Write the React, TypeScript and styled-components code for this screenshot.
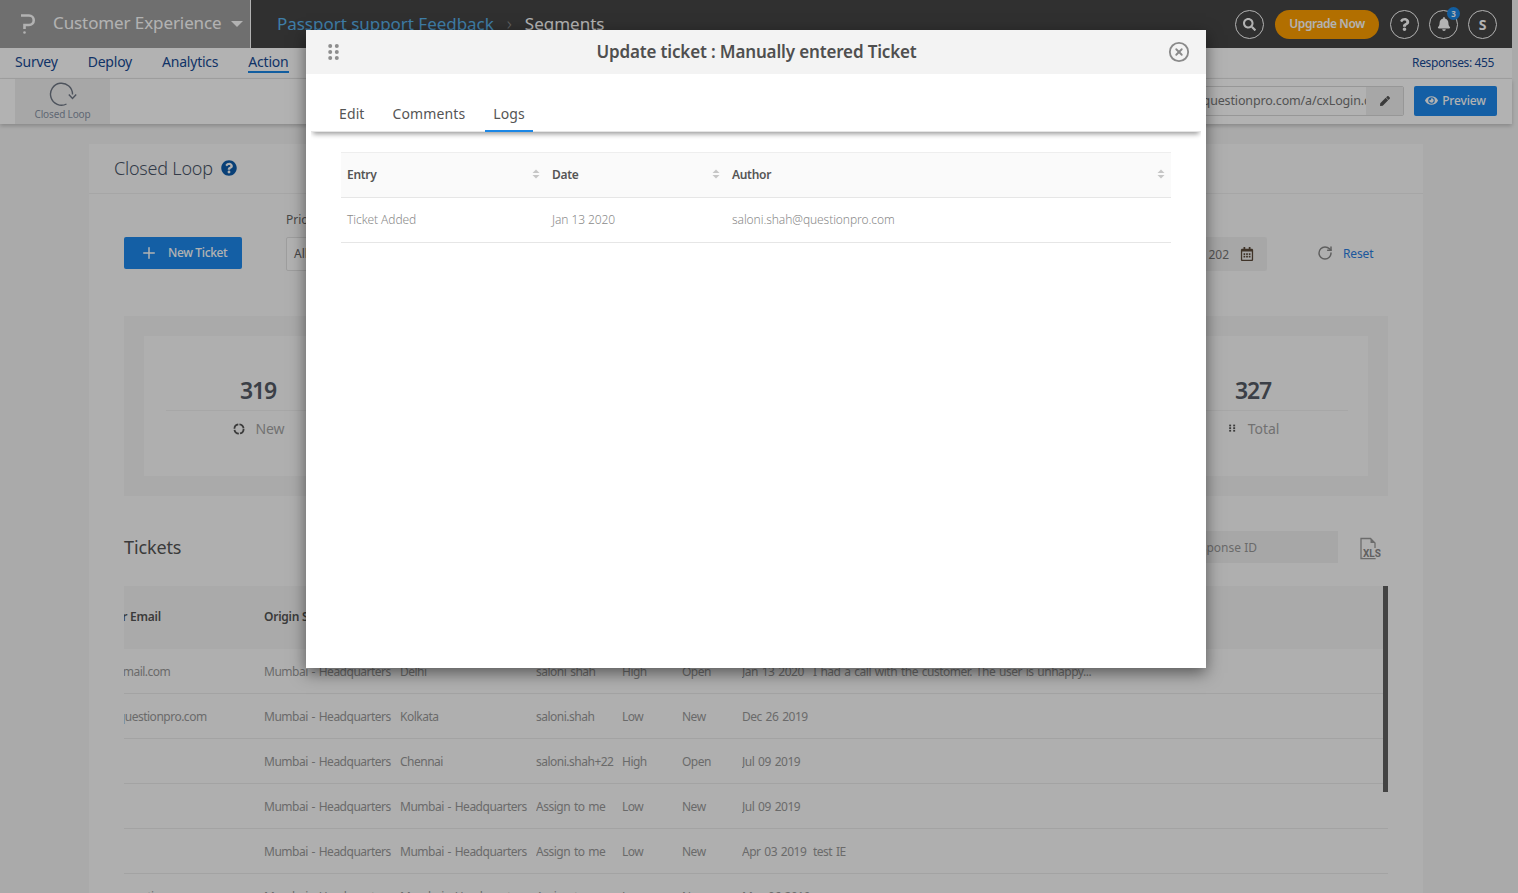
import React from "react";
import styled, { createGlobalStyle } from "styled-components";
import { RotateCw, Plus, CircleX } from "lucide-react";
import { FaSearch, FaQuestion, FaBell, FaPen, FaEye, FaRegCalendarAlt, FaQuestionCircle } from "react-icons/fa";

const Global = createGlobalStyle`
  html, body { margin: 0; padding: 0; height: 100%; overflow: hidden; background: #f4f4f4; }
  body { font-family: "Noto Sans", "Open Sans", sans-serif; }
  * { box-sizing: border-box; }
`;

const Page = styled.div`position: relative; width: 1518px; height: 893px; overflow: hidden; background: #f4f4f4;`;
const Main = styled.div`width: 1512px; height: 893px; display: flex; flex-direction: column;`;

const TopBar = styled.header`height: 48px; background: #454545; display: flex; align-items: center; flex: none;`;
const Product = styled.div`width: 251px; height: 48px; background: #9f9f9f; border-right: 1px solid #fff; display: flex; align-items: center; padding: 0 0 1px 20px; color: #fff; font-size: 17px; letter-spacing: -.1px;`;
const ProductName = styled.span`margin-left: 17px; padding-bottom: 2px;`;
const Caret = styled.span`margin-left: 9px; width: 0; height: 0; border-left: 6px solid transparent; border-right: 6px solid transparent; border-top: 6px solid #fff;`;
const Crumbs = styled.div`margin-left: 26px; padding-bottom: 2px; font-size: 17px; display: flex; align-items: center; white-space: nowrap;`;
const CrumbLink = styled.span`color: #5bb5f0; letter-spacing: -.03px;`;
const CrumbSep = styled.span`color: #8c8c8c; margin: 0 13px; font-size: 19px; font-weight: 300; line-height: 20px;`;
const CrumbNow = styled.span`color: #fff;`;
const TopActions = styled.div`margin-left: auto; display: flex; align-items: center; gap: 10px; padding-right: 15px;`;
const Round = styled.div`position: relative; width: 29px; height: 29px; border-radius: 50%; border: 1.5px solid #fff; display: flex; align-items: center; justify-content: center; color: #fff; font-size: 14px; font-weight: 700;`;
const Upgrade = styled.div`width: 104px; height: 29px; margin: 0 1px; border-radius: 15px; background: #ff9f00; color: #fff; font-size: 12px; font-weight: 600; display: flex; align-items: center; justify-content: center; letter-spacing: -.45px; padding-bottom: 1px;`;
const Badge = styled.span`position: absolute; top: -4px; right: -3px; width: 13px; height: 13px; border-radius: 50%; background: #1b87e6; font-size: 8px; font-weight: 700; display: flex; align-items: center; justify-content: center;`;

const NavBar = styled.nav`height: 31px; flex: none; background: #fff; border-bottom: 1px solid #e6e6e6; display: flex; align-items: center; padding: 0 18px 3px 15px; font-size: 14px; letter-spacing: -.22px; color: #174a94;`;
const NavItem = styled.span<{ $active?: boolean }>`margin-right: 30px; line-height: 18px; ${p => p.$active ? "border-bottom: 2px solid #1b87e6; margin-top: 2px;" : ""}`;
const Responses = styled.span`margin-left: auto; padding-top: 2px; font-size: 12px; letter-spacing: -.38px;`;

const SubBar = styled.div`height: 45px; flex: none; background: #fff; display: flex; align-items: center; padding: 0 15px 1px; box-shadow: 0 2px 4px rgba(0,0,0,.2); position: relative;`;
const Tile = styled.div`width: 95px; height: 45px; margin-bottom: -1px; background: #f0f0f0; display: flex; flex-direction: column; align-items: center; color: #8a94a6; font-size: 10px; letter-spacing: -.15px; padding-top: 1px; line-height: 14px;`;
const UrlBox = styled.div`margin-left: auto; width: 276px; height: 30px; border: 1px solid #d9d9d9; border-radius: 2px; display: flex; align-items: center; overflow: hidden; font-size: 12.5px; color: #777; background: #fff;`;
const UrlText = styled.span`flex: 1; white-space: nowrap; overflow: hidden; letter-spacing: -.15px; padding-bottom: 1px;`;
const UrlEdit = styled.span`width: 37px; height: 100%; background: #f0f0f0; display: flex; align-items: center; justify-content: center; color: #555; font-size: 10px;`;
const Preview = styled.div`margin-left: 10px; width: 83px; height: 30px; background: #1d89ec; color: #fff; border-radius: 2px; font-size: 12px; font-weight: 500; display: flex; align-items: center; justify-content: center; gap: 4px; letter-spacing: -.15px; padding-bottom: 1px;`;

const Card = styled.section`margin: 20px 0 0 89px; width: 1334px; background: #fbfbfb; flex: none;`;
const CardHead = styled.div`height: 50px; padding: 0 0 2px 25px; border-bottom: 1px solid #eee; display: flex; align-items: center; gap: 8px; font-size: 18px; font-weight: 300; color: #4a5568; letter-spacing: -.22px;`;
const CardBody = styled.div`padding: 19px 35px 0;`;
const Filters = styled.div`display: flex; align-items: flex-end;`;
const NewTicket = styled.div`width: 118px; height: 32px; margin-bottom: 2px; background: #1d89ec; color: #fff; border-radius: 2px; display: flex; align-items: center; padding: 0 0 1px 16px; gap: 10px; font-size: 12px; font-weight: 500; letter-spacing: -.35px;`;
const Field = styled.div`margin-left: 44px; display: flex; flex-direction: column; gap: 10px; font-size: 12px; line-height: 14px; color: #666;`;
const SelectBox = styled.div`width: 160px; height: 34px; border: 1px solid #e3e3e3; border-radius: 2px; background: #fff; padding-left: 7px; display: flex; align-items: center; color: #666;`;
const DateBox = styled.div`margin-left: auto; width: 180px; height: 34px; border-radius: 2px; background: #f0f0f0; font-size: 12px; color: #777; display: flex; align-items: center; justify-content: flex-end; gap: 11px; padding-right: 13px;`;
const Reset = styled.div`margin: 0 15px 0 50px; width: 56px; height: 34px; display: flex; align-items: center; gap: 10px; font-size: 12px; color: #2a7de0; letter-spacing: -.15px; padding-bottom: 2px;`;
const ResetIcon = styled.span`display: flex; color: #888;`;

const Stats = styled.div`margin-top: 45px; height: 180px; background: #f4f4f4; padding: 20px;`;
const StatsInner = styled.div`height: 140px; background: #fbfbfb; padding: 0 20px 0 22px; display: flex; justify-content: space-between;`;
const Stat = styled.div<{ $w: number }>`width: ${p => p.$w}px; display: flex; flex-direction: column; align-items: center;`;
const StatNum = styled.div`height: 75px; width: 100%; border-bottom: 1px solid #f0f0f0; font-size: 23px; font-weight: 600; color: #555b66; text-align: center; line-height: 30px; padding-top: 39px; letter-spacing: -1.2px;`;
const StatLabel = styled.div<{ $gap: number }>`margin: 9px 0 0 2px; font-size: 14px; color: #a3a3a3; display: flex; align-items: center; gap: ${p => p.$gap}px; line-height: 18px; letter-spacing: -.05px;`;
const StatIcon = styled.svg`color: #555; flex: none;`;

const TicketsBar = styled.div`margin-top: 35px; height: 32px; display: flex; align-items: center;`;
const TicketsTitle = styled.h2`margin: 0; font-size: 18px; font-weight: 400; color: #555; letter-spacing: -.12px;`;
const SearchBox = styled.div`margin-left: auto; width: 260px; height: 32px; background: #f0f0f0; display: flex; align-items: center; padding-left: 51px; font-size: 12px; color: #999; white-space: nowrap;`;
const XlsWrap = styled.div`margin: 3px 7px 0 21px; display: flex;`;

const TableWrap = styled.div`position: relative; margin-top: 23px; overflow: hidden; height: 330px;`;
const Thumb = styled.div`position: absolute; top: 0; right: 0; width: 5px; height: 206px; background: #606060;`;
const Grid = styled.div`margin-left: -52px; display: grid; grid-template-columns: 192px 136px 136px 86px 60px 60px 71px 1fr; font-size: 12px; color: #999; white-space: nowrap;`;
const Row = styled.div`display: contents;`;
const HeadCell = styled.div`height: 63px; background: #f4f4f4; font-weight: 600; color: #555; display: flex; align-items: center; letter-spacing: -.25px; padding-bottom: 3px;`;
const Cell = styled.div`height: 45px; border-bottom: 1px solid #eaeaea; display: flex; align-items: center; letter-spacing: -.5px; word-spacing: 1.2px; overflow: hidden;`;

const Overlay = styled.div`position: absolute; inset: 0; background: rgba(0,0,0,.3);`;
const Modal = styled.div`position: absolute; left: 306px; top: 30px; width: 900px; height: 638px; background: #fff; box-shadow: 0 5px 15px rgba(0,0,0,.5); display: flex; flex-direction: column;`;
const ModalHead = styled.div`height: 44px; flex: none; background: #f3f3f3; display: flex; align-items: center; justify-content: space-between; padding: 0 16px 0 22px;`;
const ModalTitle = styled.h1`margin: 0 0 0 5px; padding-bottom: 2px; font-size: 17px; font-weight: 600; color: #4f4f4f; letter-spacing: -.15px;`;
const CloseIcon = styled.span`display: flex; color: #8a8a8a;`;
const Tabs = styled.div`margin: 0 5px; height: 58px; flex: none; border-bottom: 1px solid #e5e5e5; box-shadow: 0 4px 5px -2px rgba(0,0,0,.4); display: flex; align-items: flex-end; padding-left: 20px; clip-path: inset(0 0 -12px 0);`;
const Tab = styled.div<{ $active?: boolean }>`height: 35px; padding: 0 8px; margin-right: 12px; font-size: 14px; color: #555; letter-spacing: .12px; display: flex; align-items: center; margin-bottom: -1px; border-bottom: 2px solid ${p => p.$active ? "#1b87e6" : "transparent"};`;
const LogTable = styled.div`margin: 20px 35px 0; display: grid; grid-template-columns: 205px 180px 1fr; font-size: 12px;`;
const LogHead = styled.div`height: 46px; background: #fafafa; border-top: 1px solid #eee; border-bottom: 1px solid #e6e6e6; display: flex; align-items: center; justify-content: space-between; padding: 0 6px 2px; font-weight: 600; color: #555; letter-spacing: -.3px;`;
const LogCell = styled.div`height: 45px; border-bottom: 1px solid #e6e6e6; display: flex; align-items: center; padding: 0 6px 2px; color: #8a8a8a; font-weight: 300; letter-spacing: -.08px;`;

const SortIcon = () => (
  <svg width="8" height="10" viewBox="0 0 8 10"><path d="M4 0.5 7.5 4H.5zM4 9.5 .5 6h7z" fill="#c6c6c6" /></svg>
);
const Grip = () => (
  <svg width="12" height="16" viewBox="0 0 12 16" fill="#8d8d8d">
    {[2, 8, 14].map(y => [2.2, 8.8].map(x => <circle key={`${x}-${y}`} cx={x} cy={y} r="2" />))}
  </svg>
);
const Logo = () => (
  <svg width="16" height="22" viewBox="0 0 16 22" fill="none" stroke="#fff" strokeWidth="2.6">
    <path d="M1 2.5h8a4.6 4.6 0 0 1 0 9.5H4.5v4" />
    <circle cx="4.5" cy="19.5" r="1.3" fill="#fff" stroke="none" />
  </svg>
);
const LoopIcon = () => (
  <svg width="30" height="27" viewBox="0 0 30 27" fill="none" stroke="#6f7785" strokeWidth="1.4">
    <path d="M18.5 24A11 11 0 1 1 24.5 14.5" />
    <path d="M20.8 14.5 24.5 18.4 28.2 14.5" />
  </svg>
);
const XlsIcon = () => (
  <svg width="22" height="24" viewBox="0 0 22 24" fill="none">
    <path d="M2 1.5h9.5L16 6v15.5H2z" stroke="#9a9a9a" strokeWidth="1.3" />
    <path d="M11.5 1.5V6H16z" fill="#9a9a9a" />
    <rect x="4" y="11" width="18" height="10" fill="#fbfbfb" />
    <text x="4" y="20" fontSize="10" fontWeight="700" fontFamily="Roboto, sans-serif" fill="#8a8a8a">XLS</text>
  </svg>
);

const rows = [
  ["jyotika@gmail.com", "Mumbai - Headquarters", "Delhi", "saloni shah", "High", "Open", "Jan 13 2020", "I had a call with the customer. The user is unhappy..."],
  ["salonis@questionpro.com", "Mumbai - Headquarters", "Kolkata", "saloni.shah", "Low", "New", "Dec 26 2019", ""],
  ["", "Mumbai - Headquarters", "Chennai", "saloni.shah+22", "High", "Open", "Jul 09 2019", ""],
  ["", "Mumbai - Headquarters", "Mumbai - Headquarters", "Assign to me", "Low", "New", "Jul 09 2019", ""],
  ["", "Mumbai - Headquarters", "Mumbai - Headquarters", "Assign to me", "Low", "New", "Apr 03 2019", "test IE"],
  ["vallhani@questionpro.com", "Mumbai - Headquarters", "Mumbai - Headquarters", "Assign to me", "Low", "New", "May 06 2019", ""],
];
const heads = ["Customer Email", "Origin Store", "Location", "Assigned", "Priority", "Status", "Date", "Comment"];

export default function App() {
  return (
    <Page>
      <Global />
      <Main>
        <TopBar>
          <Product>
            <Logo />
            <ProductName>Customer Experience</ProductName>
            <Caret />
          </Product>
          <Crumbs>
            <CrumbLink>Passport support Feedback</CrumbLink>
            <CrumbSep>›</CrumbSep>
            <CrumbNow>Segments</CrumbNow>
          </Crumbs>
          <TopActions>
            <Round><FaSearch size={13} /></Round>
            <Upgrade>Upgrade Now</Upgrade>
            <Round><FaQuestion size={13} /></Round>
            <Round><FaBell size={14} /><Badge>3</Badge></Round>
            <Round>S</Round>
          </TopActions>
        </TopBar>
        <NavBar>
          <NavItem>Survey</NavItem>
          <NavItem>Deploy</NavItem>
          <NavItem>Analytics</NavItem>
          <NavItem $active>Action</NavItem>
          <Responses>Responses: 455</Responses>
        </NavBar>
        <SubBar>
          <Tile>
            <LoopIcon />
            Closed Loop
          </Tile>
          <UrlBox>
            <UrlText>https://www.questionpro.com/a/cxLogin.do</UrlText>
            <UrlEdit><FaPen /></UrlEdit>
          </UrlBox>
          <Preview><FaEye size={13} />Preview</Preview>
        </SubBar>
        <Card>
          <CardHead>
            Closed Loop
            <FaQuestionCircle size={16} color="#0d5cab" />
          </CardHead>
          <CardBody>
            <Filters>
              <NewTicket><Plus size={18} strokeWidth={2} />New Ticket</NewTicket>
              <Field>
                Priority
                <SelectBox>All</SelectBox>
              </Field>
              <DateBox>
                Jan 13 202
                <FaRegCalendarAlt size={14} color="#5b4a3a" />
              </DateBox>
              <Reset>
                <ResetIcon><RotateCw size={16} strokeWidth={2.2} /></ResetIcon>
                Reset
              </Reset>
            </Filters>
            <Stats>
              <StatsInner>
                <Stat $w={184}>
                  <StatNum>319</StatNum>
                  <StatLabel $gap={10}>
                    <StatIcon width="12" height="12" viewBox="0 0 12 12" fill="none">
                      <circle cx="6" cy="6" r="4.6" stroke="currentColor" strokeWidth="1.8" strokeDasharray="6 1.2" />
                    </StatIcon>
                    New
                  </StatLabel>
                </Stat>
                <Stat $w={190}>
                  <StatNum>327</StatNum>
                  <StatLabel $gap={12}>
                    <StatIcon width="7" height="10" viewBox="0 0 8 10" fill="currentColor">
                      {[1, 4, 7].map(y => [1.2, 5.8].map(x => <rect key={`${x}-${y}`} x={x - 1} y={y - 1} width="2.2" height="2" />))}
                    </StatIcon>
                    Total
                  </StatLabel>
                </Stat>
              </StatsInner>
            </Stats>
            <TicketsBar>
              <TicketsTitle>Tickets</TicketsTitle>
              <SearchBox>Search by Response ID</SearchBox>
              <XlsWrap><XlsIcon /></XlsWrap>
            </TicketsBar>
            <TableWrap>
              <Grid>
                <Row>{heads.map(h => <HeadCell key={h}>{h}</HeadCell>)}</Row>
                {rows.map((r, i) => (
                  <Row key={i}>{r.map((c, j) => <Cell key={j}>{c}</Cell>)}</Row>
                ))}
              </Grid>
              <Thumb />
            </TableWrap>
          </CardBody>
        </Card>
      </Main>
      <Overlay />
      <Modal>
        <ModalHead>
          <Grip />
          <ModalTitle>Update ticket : Manually entered Ticket</ModalTitle>
          <CloseIcon><CircleX size={22} strokeWidth={2} /></CloseIcon>
        </ModalHead>
        <Tabs>
          <Tab>Edit</Tab>
          <Tab>Comments</Tab>
          <Tab $active>Logs</Tab>
        </Tabs>
        <LogTable>
          <LogHead>Entry<SortIcon /></LogHead>
          <LogHead>Date<SortIcon /></LogHead>
          <LogHead>Author<SortIcon /></LogHead>
          <LogCell>Ticket Added</LogCell>
          <LogCell>Jan 13 2020</LogCell>
          <LogCell>saloni.shah@questionpro.com</LogCell>
        </LogTable>
      </Modal>
    </Page>
  );
}
